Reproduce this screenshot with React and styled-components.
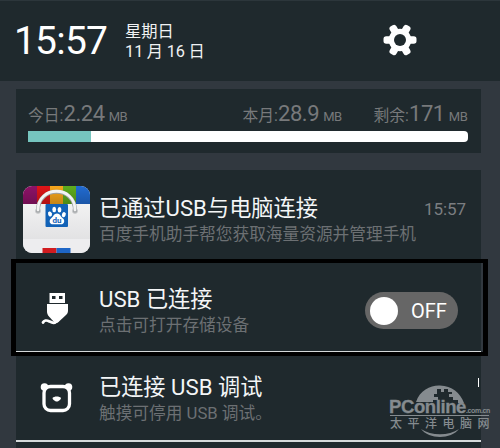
import styled, { createGlobalStyle } from "styled-components"

const GlobalStyle = createGlobalStyle`
  body {
    margin: 0;
    background: #31383f;
    overflow: hidden;
    font-family: Roboto, "Noto Sans CJK SC", sans-serif;
  }
`
const Screen = styled.div`
  position: relative;
  display: flex;
  flex-direction: column;
  width: 500px;
  height: 448px;
  background: #31383f;
  overflow: hidden;
`
const Header = styled.header`
  display: flex;
  align-items: flex-start;
  box-sizing: border-box;
  height: 81px;
  padding-left: 14px;
  background: #1f292d;
  border-top: 1px solid #2c363b;
`
const Clock = styled.div`
  width: 111px;
  padding-top: 17px;
  font-size: 39px;
  line-height: 46px;
  letter-spacing: -0.8px;
  color: #fff;
`
const DateBox = styled.div`
  flex: 1;
  display: flex;
  flex-direction: column;
  padding-top: 21px;
  font-size: 16.3px;
  line-height: 20px;
  word-spacing: -0.5px;
  color: #f0f2f3;
  white-space: nowrap;
`
const SettingsButton = styled.button`
  margin: 22px 83px 0 0;
  padding: 0;
  width: 34px;
  height: 34px;
  border: none;
  background: none;
`
const Card = styled.section`
  box-sizing: border-box;
  width: 465px;
  margin-left: 16px;
  background: #1f292d;
`
const DataCard = styled(Card)`
  height: 64px;
  margin-top: 8px;
  padding: 11px 13px 0 12px;
`
const DataRow = styled.div`
  display: flex;
  height: 31px;
`
const Usage = styled.div`
  width: ${(props) => props.width}px;
  display: flex;
  align-items: baseline;
  line-height: 28px;
  color: #77797b;
  white-space: nowrap;
`
const UsageLabel = styled.span`
  font-size: 15.8px;
`
const UsageValue = styled.span`
  font-size: 22px;
  letter-spacing: -0.4px;
`
const Unit = styled.span`
  margin-left: 4px;
  font-size: 13px;
  letter-spacing: -0.5px;
`
const Bar = styled.div`
  height: 11px;
  border-radius: 0 4px 4px 0;
  background: #fff;
  overflow: hidden;
`
const BarFill = styled.div`
  width: ${(props) => props.width}px;
  height: 100%;
  background: #76c5bf;
`
const List = styled(Card)`
  flex: 1;
  margin-top: 17px;
`
const Item = styled.div`
  display: flex;
  align-items: flex-start;
  box-sizing: border-box;
  height: ${(props) => props.height}px;
  border-bottom: ${(props) => props.line || 0}px solid #d5d9da;
`
const IconCell = styled.div`
  width: 83px;
  flex-shrink: 0;
  padding-top: ${(props) => props.top}px;
`
const Texts = styled.div`
  flex: 1;
  padding-top: ${(props) => props.top}px;
  white-space: nowrap;
`
const Title = styled.div`
  height: 30px;
  font-size: 22.2px;
  line-height: 30px;
  color: #f4f6f7;
`
const Description = styled.div`
  height: 24px;
  font-size: 16.7px;
  line-height: 24px;
  color: #6c7073;
`
const Time = styled.div`
  width: 57px;
  padding-top: 27px;
  font-size: 17px;
  line-height: 24px;
  letter-spacing: -0.1px;
  color: #7b7e81;
`
const Toggle = styled.button`
  display: flex;
  align-items: center;
  box-sizing: border-box;
  width: 93px;
  height: 37px;
  margin: 29px 23px 0 0;
  padding: 0 0 0 5px;
  border: none;
  border-radius: 19px;
  background: #666;
  color: #fff;
  font-family: Roboto, sans-serif;
  font-size: 20px;
`
const Knob = styled.span`
  width: 28px;
  height: 28px;
  margin-right: 13px;
  border-radius: 50%;
  background: #fff;
`
const Highlight = styled.div`
  position: absolute;
  left: 11px;
  top: 259px;
  box-sizing: border-box;
  width: 477px;
  height: 97px;
  border: solid #000;
  border-width: 4px 5px 4px 5px;
`
const Caret = styled.div`
  position: absolute;
  left: 478px;
  top: 378px;
  width: 1px;
  height: 9px;
  background: #fff;
`
const Watermark = styled.div`
  position: absolute;
  left: 389px;
  top: 384px;
  width: 102px;
  height: 54px;
  color: #858b8f;
  white-space: nowrap;
`
const Globe = styled.svg`
  position: absolute;
  left: 0;
  top: 0;
`
const Brand = styled.div`
  position: absolute;
  left: 0;
  top: 15px;
  display: flex;
  align-items: baseline;
  font-family: "Liberation Sans", sans-serif;
  font-size: 18.5px;
  line-height: 16px;
  font-weight: bold;
  letter-spacing: -0.4px;
  -webkit-text-stroke: 0.3px #858b8f;
`
const Domain = styled.span`
  font-size: 7px;
  letter-spacing: -0.35px;
  -webkit-text-stroke: 0;
`
const BrandChinese = styled.div`
  position: absolute;
  left: 1px;
  top: 33px;
  font-family: "Noto Sans CJK SC", sans-serif;
  font-size: 12px;
  line-height: 12px;
  font-weight: 500;
  letter-spacing: 5.5px;
`

function Gear() {
  return (
    <svg width="34" height="34" viewBox="-17 -17 34 34" fill="#fff">
      {[0, 60, 120].map((a) => (
        <rect key={a} x="-16.5" y="-3.8" width="33" height="7.6" rx="2.8" transform={`rotate(${a})`} />
      ))}
      <circle r="8.8" fill="none" stroke="#fff" strokeWidth="5" />
      <circle r="6" fill="#1f292d" />
    </svg>
  )
}

function BaiduBag() {
  return (
    <svg width="83" height="68" viewBox="0 0 83 68">
      <defs>
        <clipPath id="bag"><rect x="7" y="0" width="67" height="67" rx="9" /></clipPath>
        <linearGradient id="paper" x1="0" y1="0" x2="0" y2="1">
          <stop offset="0" stopColor="#fafafa" />
          <stop offset="1" stopColor="#dcdcde" />
        </linearGradient>
        <linearGradient id="shade" x1="0" y1="0" x2="0" y2="1">
          <stop offset="0" stopColor="#000" stopOpacity="0" />
          <stop offset="1" stopColor="#000" stopOpacity="0.2" />
        </linearGradient>
      </defs>
      <g clipPath="url(#bag)">
        <rect x="7" width="67" height="67" fill="url(#paper)" />
        <rect x="7" width="14" height="18" fill="#8d1267" />
        <rect x="21" width="13" height="18" fill="#df1518" />
        <rect x="34" width="13" height="18" fill="#f7a61c" />
        <rect x="47" width="13" height="18" fill="#5fac1d" />
        <rect x="60" width="14" height="18" fill="#216bd1" />
        <rect x="7" width="67" height="18" fill="url(#shade)" />
        <rect x="7" y="53" width="67" height="14" fill="#ededef" />
        <rect x="26.5" y="62" width="14" height="5" fill="#d11c20" />
        <rect x="40.5" y="62" width="14" height="5" fill="#1e66c6" />
      </g>
      <rect x="29.5" y="18" width="22.5" height="23" rx="1" fill="#1262b7" />
      <g fill="#fff">
        <ellipse cx="34" cy="28" rx="1.9" ry="2.6" transform="rotate(-20 34 28)" />
        <ellipse cx="38.2" cy="23.5" rx="1.9" ry="2.7" />
        <ellipse cx="43.5" cy="23.7" rx="1.9" ry="2.7" />
        <ellipse cx="47.8" cy="28.7" rx="1.9" ry="2.6" transform="rotate(20 47.8 28.7)" />
        <path d="M41 27.5c3 0 3.7 3.2 6 5 2.3 2 1.2 5.8-2 5.8h-8c-3.500 0-4.400-3.800-2-5.800 2.200-1.800 3-5 6-5z" />
      </g>
      <text x="41" y="37" textAnchor="middle" fontSize="8" fontWeight="bold" fill="#1262b7">du</text>
      <circle cx="22" cy="25" r="2.8" fill="#bfc1c3" />
      <circle cx="59" cy="25" r="2.8" fill="#bfc1c3" />
      <path d="M22 24.500C22 -0.500 59 -0.500 59 24.500" fill="none" stroke="#9b9fa1" strokeWidth="4" strokeLinecap="round" />
      <path d="M22 24C22 -1 59 -1 59 24" fill="none" stroke="#f3f3f3" strokeWidth="2.8" strokeLinecap="round" />
    </svg>
  )
}

function UsbPlug() {
  return (
    <svg width="83" height="36" viewBox="0 0 83 36">
      <path fill="#fff" fillRule="evenodd" d="M33.500 1h15.500v10H33.500zM36 4v3h3.500V4zM43 4v3h3.500V4z" />
      <path fill="#fff" d="M31 12h21v6.500c0 2-.5 3-2 4.500l-7.500 7c-1.500 1.300-3 1.300-4.500 0l-5-5.500c-1.500-1.800-2-3-2-5z" />
      <path d="M27 30.500c1-2 3.500-2.500 6-1.300 3 1.500 5 3 8.500-.7" fill="none" stroke="#fff" strokeWidth="2.800" strokeLinecap="round" />
    </svg>
  )
}

function BearFace() {
  return (
    <svg width="83" height="36" viewBox="0 0 83 36">
      <circle cx="28.500" cy="6" r="3.800" fill="#fff" />
      <circle cx="52.500" cy="6" r="3.800" fill="#fff" />
      <rect x="28" y="5.500" width="25.500" height="24" rx="6.500" fill="#1f292d" stroke="#fff" strokeWidth="3.300" />
      <path d="M36.500 17c1.500-2 7-2 8.500 0 0 1.500-2.500 3.500-4.200 3.500S36.500 18.500 36.500 17z" fill="#fff" />
    </svg>
  )
}

const usages = [
  { label: "今日:", value: "2.24", width: 214.5 },
  { label: "本月:", value: "28.9", width: 131 },
  { label: "剩余:", value: "171", width: 94 },
]

function App() {
  return (
    <Screen>
      <GlobalStyle />
      <Header>
        <Clock>15:57</Clock>
        <DateBox>
          <span>星期日</span>
          <span>11 月 16 日</span>
        </DateBox>
        <SettingsButton aria-label="设置"><Gear /></SettingsButton>
      </Header>
      <DataCard>
        <DataRow>
          {usages.map((usage) => (
            <Usage key={usage.label} width={usage.width}>
              <UsageLabel>{usage.label}</UsageLabel>
              <UsageValue>{usage.value}</UsageValue>
              <Unit>MB</Unit>
            </Usage>
          ))}
        </DataRow>
        <Bar><BarFill width={63} /></Bar>
      </DataCard>
      <List>
        <Item height={93}>
          <IconCell top={16}><BaiduBag /></IconCell>
          <Texts top={23}>
            <Title>已通过USB与电脑连接</Title>
            <Description>百度手机助手帮您获取海量资源并管理手机</Description>
          </Texts>
          <Time>15:57</Time>
        </Item>
        <Item height={89} line={1}>
          <IconCell top={29}><UsbPlug /></IconCell>
          <Texts top={21}>
            <Title>USB 已连接</Title>
            <Description>点击可打开存储设备</Description>
          </Texts>
          <Toggle><Knob />OFF</Toggle>
        </Item>
        <Item height={90} line={2}>
          <IconCell top={29}><BearFace /></IconCell>
          <Texts top={20}>
            <Title>已连接 USB 调试</Title>
            <Description>触摸可停用 USB 调试。</Description>
          </Texts>
        </Item>
      </List>
      <Highlight />
      <Caret />
      <Watermark>
        <Globe width="102" height="54" viewBox="0 0 102 54">
          <path fill="#858b8f" d="M27 18C31 6 42 1 51 1.500c12 .5 20 7 24 17.500h-6v-3h-5v-3h-4v-3h3V8h-4V5h-4v3h-3V5h-4v5h-3v3h4v3h-5v2z" />
          <path fill="#858b8f" d="M32 45c8 10.500 30 10.500 38 0-10 7-28 7-38 0z" />
          <path stroke="#858b8f" strokeWidth="1" d="M1 31.500h99" />
        </Globe>
        <Brand>PConline<Domain>.com.cn</Domain></Brand>
        <BrandChinese>太平洋电脑网</BrandChinese>
      </Watermark>
    </Screen>
  )
}

export default App
